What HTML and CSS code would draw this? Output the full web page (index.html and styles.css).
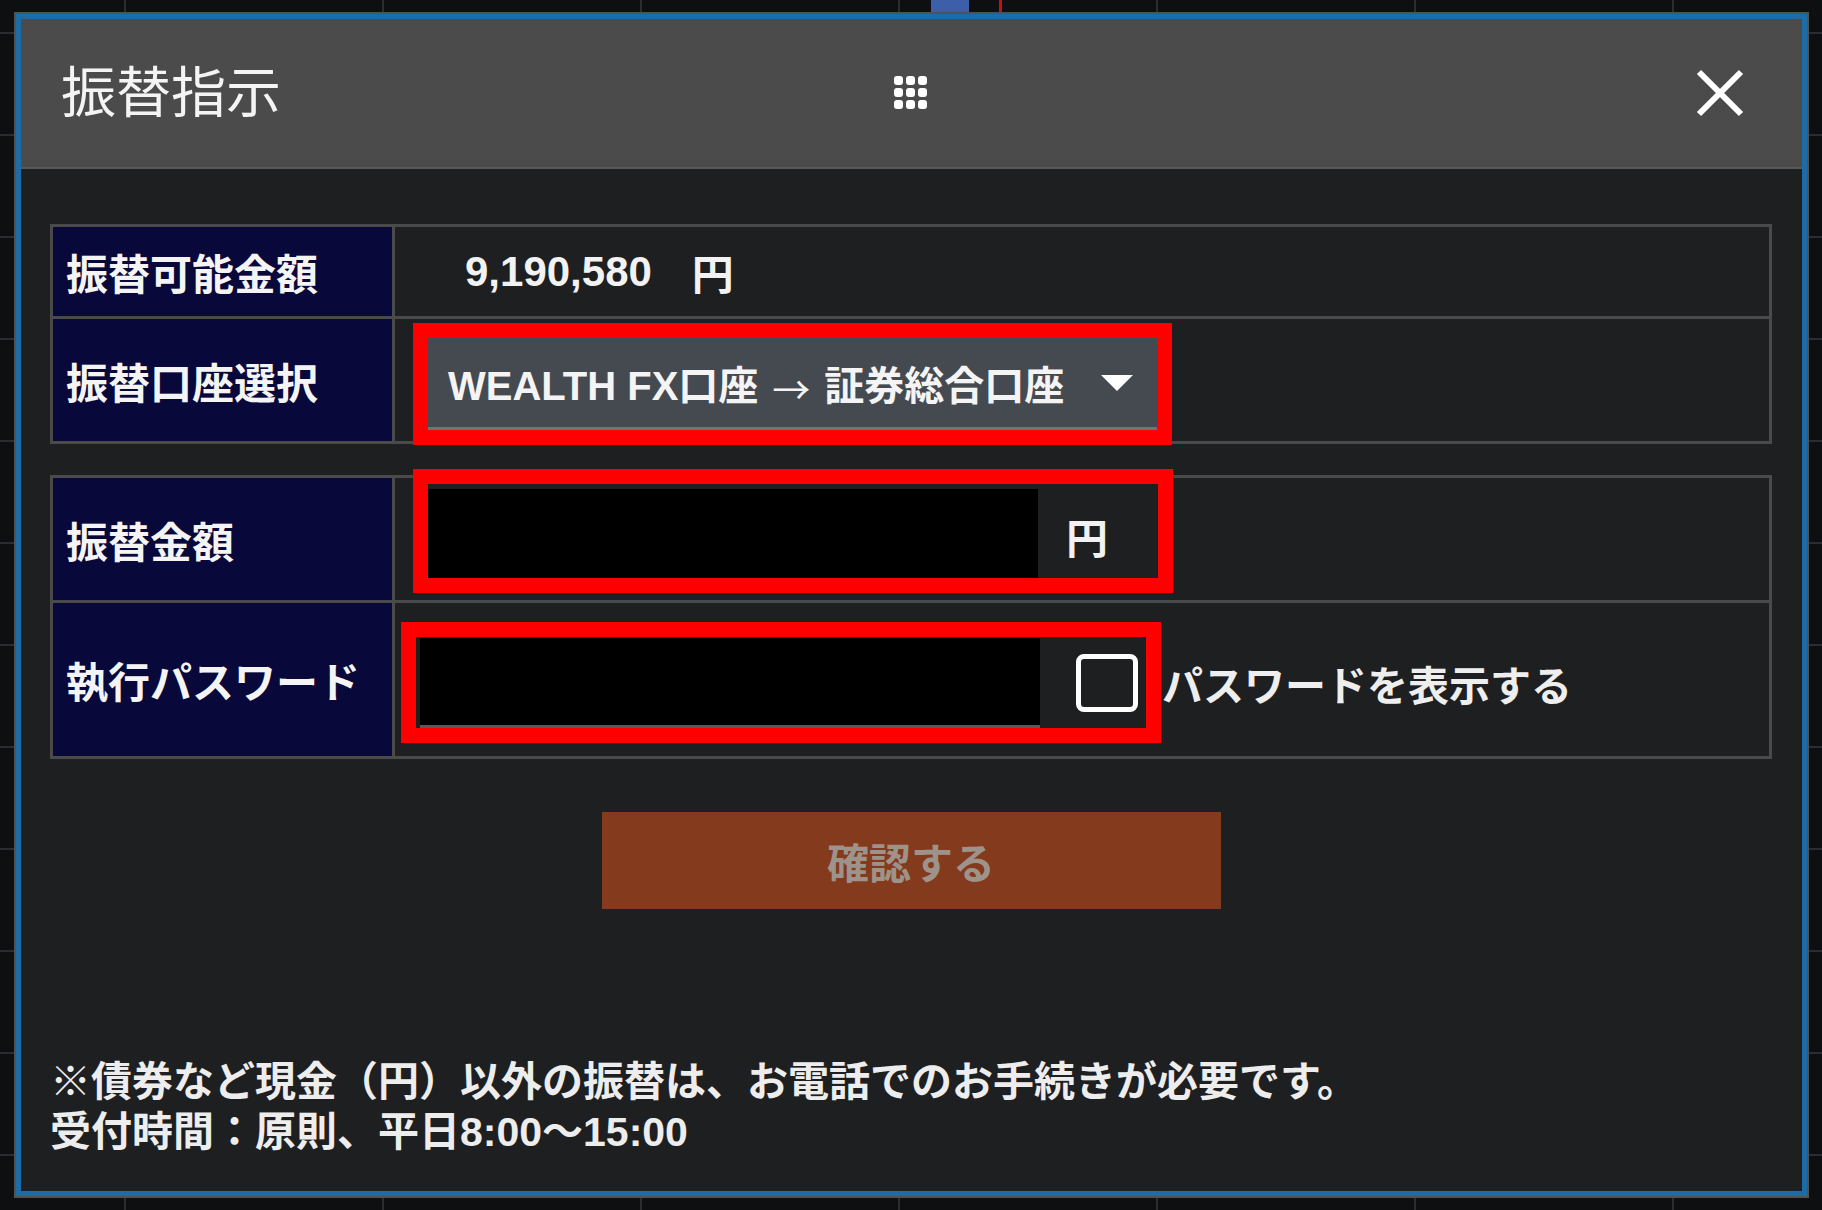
FILE: index.html
```html
<!DOCTYPE html>
<html lang="ja">
<head>
  <meta charset="UTF-8" />
  <title>振替指示</title>
  <link rel="stylesheet" href="styles.css">
</head>
<body>
  <div class="dialog">
    <div class="dialog-header">
      <div class="dialog-title">振替指示</div>
      <div class="drag-handle">
        <svg width="34" height="34" viewBox="0 0 34 34">
          <rect x="0" y="0" width="9" height="9" rx="3" />
          <rect x="12" y="0" width="9" height="9" rx="3" />
          <rect x="24" y="0" width="9" height="9" rx="3" />
          <rect x="0" y="12" width="9" height="9" rx="3" />
          <rect x="12" y="12" width="9" height="9" rx="3" />
          <rect x="24" y="12" width="9" height="9" rx="3" />
          <rect x="0" y="24" width="9" height="9" rx="3" />
          <rect x="12" y="24" width="9" height="9" rx="3" />
          <rect x="24" y="24" width="9" height="9" rx="3" />
        </svg>
      </div>
      <div class="close-btn">
        <svg width="50" height="50" viewBox="0 0 50 50">
          <path d="M4 4 L46 46 M46 4 L4 46" />
        </svg>
      </div>
    </div>

    <div class="dialog-body">
      <div class="form-table">
        <div class="form-row row-balance">
          <div class="form-label">振替可能金額</div>
          <div class="form-value">
            <span class="amount">9,190,580</span>
            <span class="yen">円</span>
          </div>
        </div>
        <div class="form-row row-account">
          <div class="form-label">振替口座選択</div>
          <div class="form-value">
            <div class="select marked">
              <span>WEALTH FX口座<span class="arrow">→</span>証券総合口座</span>
              <span class="caret"></span>
            </div>
          </div>
        </div>
      </div>

      <div class="form-table">
        <div class="form-row row-amount">
          <div class="form-label">振替金額</div>
          <div class="form-value">
            <div class="input-group marked">
              <div class="text-input"></div>
              <span class="yen">円</span>
            </div>
          </div>
        </div>
        <div class="form-row row-password">
          <div class="form-label">執行パスワード</div>
          <div class="form-value">
            <div class="input-group password-group marked">
              <div class="text-input password-input"></div>
              <span class="checkbox"></span>
            </div>
            <span class="show-password">パスワードを表示する</span>
          </div>
        </div>
      </div>

      <div class="actions">
        <button class="confirm-btn" disabled>確認する</button>
      </div>

      <div class="note">
        ※債券など現金（円）以外の振替は、お電話でのお手続きが必要です。<br>
        受付時間：原則、平日8:00～15:00
      </div>
    </div>
  </div>
</body>
</html>
```

FILE: styles.css
```css
body {
  margin: 0;
  width: 1822px;
  height: 1210px;
  overflow: hidden;
  font-family: "Liberation Sans", "Noto Sans CJK JP", sans-serif;
  color: #f2f2f2;
  background-color: #0e0f11;
  background-image:
    linear-gradient(#3d5ea8, #3d5ea8),
    linear-gradient(#c41212, #c41212),
    repeating-linear-gradient(90deg, transparent 0 124px, #2c2d30 124px 126px, transparent 126px 258px),
    repeating-linear-gradient(180deg, transparent 0 32px, #2c2d30 32px 34px, transparent 34px 102px);
  background-size: 38px 12px, 3px 12px, auto, auto;
  background-position: 931px 0, 999px 0, 0 0, 0 0;
  background-repeat: no-repeat, no-repeat, repeat, repeat;
}

.dialog {
  margin: 14px 0 0 16px;
  width: 1791px;
  height: 1182px;
  box-sizing: border-box;
  border: 5px solid #1c6ca8;
  outline: 2px solid #4f5256;
  background: #1e1f21;
  display: flex;
  flex-direction: column;
}

.dialog-header {
  height: 150px;
  box-sizing: border-box;
  background: #4b4b4b;
  border-bottom: 2px solid #585858;
  display: grid;
  grid-template-columns: 1fr auto 1fr;
  align-items: center;
  padding: 0 57px 0 40px;
}

.dialog-title {
  font-family: "Noto Sans CJK JP", sans-serif;
  font-size: 55px;
  font-weight: 400;
  color: #f4f4f4;
  line-height: 1;
  padding-bottom: 10px;
}

.drag-handle {
  margin-left: 16px;
}

.drag-handle svg {
  display: block;
  fill: #ffffff;
}

.close-btn {
  justify-self: end;
}

.close-btn svg {
  display: block;
  stroke: #ffffff;
  stroke-width: 6;
}

.dialog-body {
  flex: 1;
  display: flex;
  flex-direction: column;
  padding: 55px 30px 34px 29px;
}

.form-table {
  border: 3px solid #4a4a4a;
  margin-bottom: 31px;
}

.form-row {
  display: flex;
}

.form-row + .form-row {
  border-top: 3px solid #4a4a4a;
}

.row-balance { height: 89px; }
.row-account { height: 122px; }
.row-amount { height: 122px; }
.row-password { height: 153px; }

.form-label {
  width: 342px;
  flex: none;
  box-sizing: border-box;
  background: #08083a;
  border-right: 3px solid #4a4a4a;
  padding-left: 13px;
  display: flex;
  align-items: center;
  font-size: 42px;
  font-weight: 700;
  color: #f4f4f4;
}

.form-value {
  flex: 1;
  display: flex;
  align-items: center;
  font-size: 42px;
  font-weight: 700;
}

.row-balance .form-value {
  padding-left: 70px;
}

.row-balance .yen {
  margin-left: 40px;
}

.row-account .form-value {
  align-items: flex-start;
  padding: 19px 0 0 33px;
}

.marked {
  outline: 15px solid #ff0000;
}

.select {
  width: 729px;
  height: 92px;
  box-sizing: border-box;
  background: #454a51;
  border-bottom: 3px solid #6f7276;
  display: flex;
  align-items: center;
  padding: 0 24px 0 20px;
  color: #f4f4f4;
  font-size: 40px;
}

.arrow {
  font-family: "Noto Sans CJK JP", sans-serif;
  font-weight: 400;
  font-size: 38px;
  margin: 0 14px;
  position: relative;
  top: 4px;
}

.caret {
  margin-left: auto;
  width: 0;
  height: 0;
  border-left: 16px solid transparent;
  border-right: 16px solid transparent;
  border-top: 16px solid #ffffff;
}

.row-amount .form-value {
  align-items: flex-start;
  padding: 6px 0 0 33px;
}

.input-group {
  width: 730px;
  height: 94px;
  box-sizing: border-box;
  display: flex;
  align-items: center;
}

.text-input {
  width: 610px;
  height: 89px;
  background: #000000;
  align-self: flex-end;
}

.input-group .yen {
  margin-left: 28px;
  padding-top: 8px;
}

.row-password .form-value {
  padding: 6px 0 0 21px;
}

.password-group {
  height: 91px;
  padding-left: 4px;
}

.password-input {
  width: 620px;
  height: 90px;
  box-sizing: border-box;
  border-bottom: 3px solid #5a5a5a;
  align-self: auto;
}

.checkbox {
  width: 52px;
  height: 48px;
  margin-left: 36px;
  border: 5px solid #ffffff;
  border-radius: 8px;
}

.show-password {
  margin-left: 16px;
  font-size: 41px;
  font-weight: 700;
  color: #eeeeee;
}

.actions {
  display: flex;
  justify-content: center;
  margin-top: 22px;
}

.confirm-btn {
  width: 619px;
  height: 97px;
  border: none;
  background: #843a1c;
  color: #9e938b;
  font-family: "Liberation Sans", "Noto Sans CJK JP", sans-serif;
  font-size: 42px;
  font-weight: 700;
}

.note {
  margin-top: auto;
  font-size: 41px;
  line-height: 50px;
  font-weight: 700;
  color: #ededed;
}
```
